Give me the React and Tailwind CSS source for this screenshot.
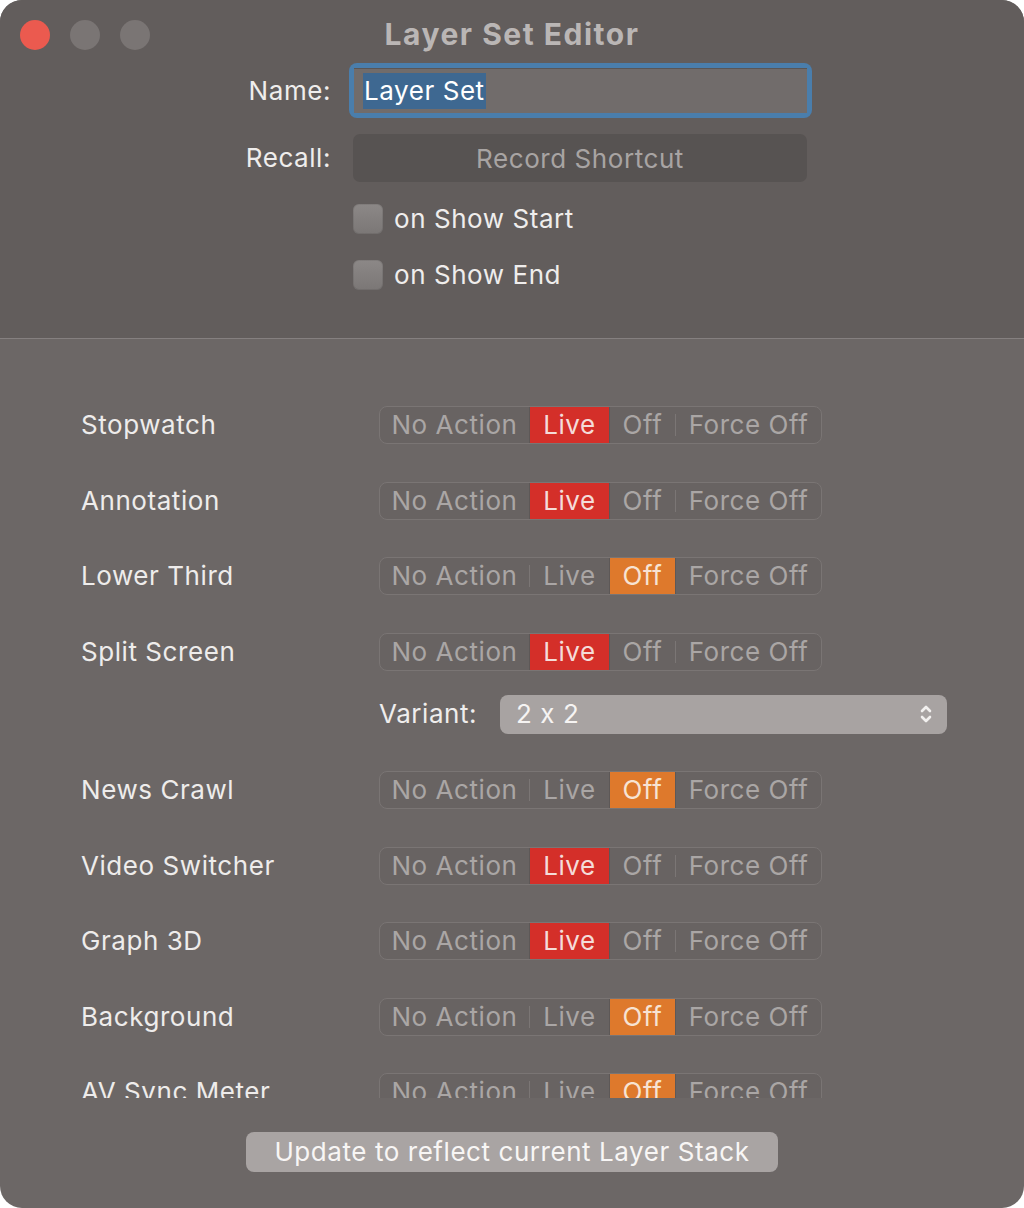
import React from "react";

const FONT = "font-['Inter','Liberation_Sans',sans-serif] tracking-[0.035em] [font-feature-settings:'calt'_0]";

const ROWS = [
  { label: "Stopwatch", value: "live" },
  { label: "Annotation", value: "live" },
  { label: "Lower Third", value: "off" },
  { label: "Split Screen", value: "live", variant: "2 x 2" },
  { label: "News Crawl", value: "off" },
  { label: "Video Switcher", value: "live" },
  { label: "Graph 3D", value: "live" },
  { label: "Background", value: "off" },
  { label: "AV Sync Meter", value: "off" },
];

const SEGMENTS = [
  { key: "none", label: "No Action", width: "w-[149px]" },
  { key: "live", label: "Live", width: "w-[79px]" },
  { key: "off", label: "Off", width: "w-[65px]" },
  { key: "force", label: "Force Off", width: "w-[145px]" },
];

function Segmented({ value }) {
  return (
    <div className="flex h-[38px] w-[443px] overflow-hidden rounded-[8px] border border-[#7a7574] bg-[#686362]">
      {SEGMENTS.map((seg, i) => {
        const selected = seg.key === value;
        const prevSelected = i > 0 && SEGMENTS[i - 1].key === value;
        const bg = selected ? (value === "live" ? "bg-[#d42f29] text-[#f4dcd9]" : "bg-[#de792c] text-[#f7e3d3]") : "text-[#aaa6a5]";
        return (
          <React.Fragment key={seg.key}>
            {i > 0 && (
              <span className={`flex w-px items-center ${selected || prevSelected ? "bg-[#5d5857]" : ""}`}>
                {!selected && !prevSelected && <span className="h-[22px] w-px bg-[#7b7675]" />}
              </span>
            )}
            <span className={`flex ${seg.width} items-center justify-center text-[26px] leading-none ${bg}`}>
              {seg.label}
            </span>
          </React.Fragment>
        );
      })}
    </div>
  );
}

function UpDown() {
  return (
    <svg width="14" height="22" viewBox="0 0 14 22" fill="none" stroke="#f2f0ef" strokeWidth="2.6" strokeLinecap="round" strokeLinejoin="round">
      <path d="M3 8 L7 4 L11 8" />
      <path d="M3 14 L7 18 L11 14" />
    </svg>
  );
}

function Checkbox({ label }) {
  return (
    <div className="flex h-[30px] items-center gap-[11px]">
      <span className="h-[30px] w-[30px] rounded-[6px] bg-gradient-to-b from-[#8c8887] to-[#7b7776] shadow-[inset_0_0_0_1px_rgba(0,0,0,0.08)]" />
      <span className="text-[26px] leading-none text-[#efedec]">{label}</span>
    </div>
  );
}

export default function App() {
  return (
    <div className={`h-[1208px] w-[1024px] bg-white ${FONT}`}>
      <div className="flex h-full w-full flex-col overflow-hidden rounded-[22px] bg-[#6c6766]">
        <div className="flex h-[339px] flex-col border-b border-[#858080] bg-[#625d5c]">
          <div className="grid h-[63px] grid-cols-[1fr_auto_1fr]">
            <div className="flex gap-[20px] pl-[20px] pt-[20px]">
              <span className="h-[30px] w-[30px] rounded-full bg-[#eb5a4f]" />
              <span className="h-[30px] w-[30px] rounded-full bg-[#7a7574]" />
              <span className="h-[30px] w-[30px] rounded-full bg-[#7a7574]" />
            </div>
            <div className="pt-[16px] text-[30px] font-bold leading-[36px] tracking-[0.05em] text-[#bab6b5]">Layer Set Editor</div>
            <div />
          </div>

          <div className="flex h-[55px] items-center">
            <span className="w-[331px] text-right text-[26px] leading-none text-[#efedec]">Name:</span>
            <div className="ml-[18px] h-[55px] w-[463px] rounded-[8px] bg-[#4a7eac] p-[5px]">
              <div className="flex h-full items-center border-t border-[#5b5655] bg-[#716c6b] pl-[9px]">
                <span className="bg-[#3e6891] px-[1px] text-[26px] leading-[36px] text-white">Layer Set</span>
              </div>
            </div>
          </div>

          <div className="mt-[16px] flex h-[48px] items-center">
            <span className="w-[331px] text-right text-[26px] leading-none text-[#efedec]">Recall:</span>
            <div className="ml-[22px] flex h-[48px] w-[454px] items-center justify-center rounded-[7px] bg-[#575352] text-[26px] text-[#a8a4a3]">
              Record Shortcut
            </div>
          </div>

          <div className="ml-[353px] mt-[22px] flex flex-col gap-[26px]">
            <Checkbox label="on Show Start" />
            <Checkbox label="on Show End" />
          </div>
        </div>

        <div className="h-[759px] overflow-hidden">
          <div className="flex flex-col gap-[37.5px] pl-[81px] pt-[67px]">
            {ROWS.map((row) => (
              <div key={row.label}>
                <div className="flex h-[38px] items-center">
                  <span className="w-[298px] text-[26px] leading-none text-[#eeeceb]">{row.label}</span>
                  <Segmented value={row.value} />
                </div>
                {row.variant && (
                  <div className="ml-[298px] mt-[24px] flex h-[39px] items-center">
                    <span className="w-[121px] text-[26px] leading-none text-[#efedec]">Variant:</span>
                    <div className="flex h-[39px] w-[447px] items-center justify-between rounded-[8px] bg-[#a8a3a2] pl-[16px] pr-[14px]">
                      <span className="text-[26px] leading-none text-[#f6f4f3]">{row.variant}</span>
                      <UpDown />
                    </div>
                  </div>
                )}
              </div>
            ))}
          </div>
        </div>

        <div className="flex flex-1 justify-center pt-[34px]">
          <div className="flex h-[40px] w-[532px] items-center justify-center rounded-[8px] bg-[#a9a4a3] text-[26px] leading-none text-[#f8f6f5]">
            Update to reflect current Layer Stack
          </div>
        </div>
      </div>
    </div>
  );
}
